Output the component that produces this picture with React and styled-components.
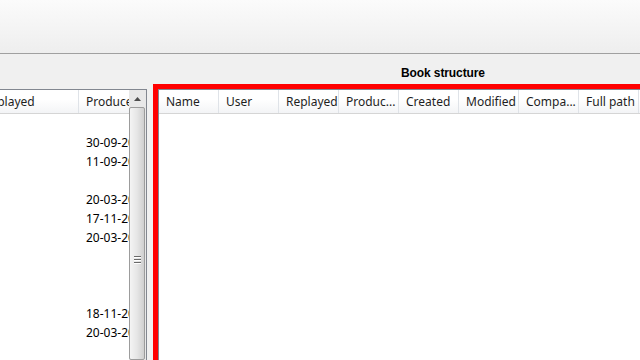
import React from "react";
import styled, { createGlobalStyle } from "styled-components";

const Global = createGlobalStyle`
  html, body { margin: 0; padding: 0; background: #f0f0f0; overflow: hidden; }
  body { font-family: "Noto Sans", "Open Sans", sans-serif; font-size: 12px; color: #1e1e1e; }
`;

const leftRows = ["", "30-09-2012", "11-09-2012", "", "20-03-2013", "17-11-2012", "20-03-2013", "", "", "", "18-11-2012", "20-03-2013", "", ""];
const rightCols = ["Name", "User", "Replayed", "Produc...", "Created", "Modified", "Compa...", "Full path"];

const App = () => {
  return (
    <Page>
      <Global />
      <Toolbar />
      <Body>
        <LeftSide>
          <ListFrame>
            <LeftList>
              <HeaderRow>
                <HeadCell $w={103}>Replayed</HeadCell>
                <HeadCell $w={60}>Produced</HeadCell>
              </HeaderRow>
              {leftRows.map((d, i) => (
                <Row key={i}>
                  <Cell $w={103} />
                  <Cell $w={60}>{d}</Cell>
                </Row>
              ))}
            </LeftList>
            <Scrollbar>
              <ArrowBtn>
                <svg width="7" height="4" viewBox="0 0 7 4">
                  <path d="M0 4 L3.5 0 L7 4 Z" fill="#4d4d4d" />
                </svg>
              </ArrowBtn>
              <Thumb>
                <Grip>
                  <span />
                  <span />
                  <span />
                </Grip>
              </Thumb>
            </Scrollbar>
          </ListFrame>
        </LeftSide>
        <RightSide>
          <Title>Book structure</Title>
          <Highlight>
            <RightList>
              <HeaderRow>
                {rightCols.map((c) => (
                  <HeadCell key={c} $w={60}>{c}</HeadCell>
                ))}
              </HeaderRow>
            </RightList>
          </Highlight>
        </RightSide>
      </Body>
    </Page>
  );
};

const Page = styled.div`
  width: 640px;
  height: 360px;
  overflow: hidden;
  display: flex;
  flex-direction: column;
`;

const Toolbar = styled.div`
  height: 53px;
  flex: none;
  background: linear-gradient(#fbfbfb, #eeeeee);
  border-bottom: 1px solid #a0a0a0;
`;

const Body = styled.div`
  flex: 1;
  display: flex;
  gap: 6px;
  min-height: 0;
`;

const LeftSide = styled.div`
  width: 147px;
  flex: none;
  padding-top: 35px;
  display: flex;
  flex-direction: column;
`;

const ListFrame = styled.div`
  flex: 1;
  display: flex;
  background: #fff;
  border-top: 1px solid #828790;
  border-right: 1px solid #828790;
  overflow: hidden;
`;

const LeftList = styled.div`
  flex: 1;
  overflow: hidden;
  & > div {
    margin-left: -24px;
  }
`;

const HeaderRow = styled.div`
  display: flex;
  height: 23px;
  background: linear-gradient(#ffffff 40%, #f3f4f6);
  border-bottom: 1px solid #d5d5d5;
`;

const HeadCell = styled.div`
  flex: none;
  width: ${(p) => p.$w}px;
  box-sizing: border-box;
  padding: 1px 0 0 7px;
  line-height: 22px;
  border-right: 1px solid #dfe3e8;
  white-space: nowrap;
  overflow: hidden;
  color: #1e1e1e;
`;

const Row = styled.div`
  display: flex;
  height: 19px;
`;

const Cell = styled.div`
  flex: none;
  width: ${(p) => p.$w}px;
  box-sizing: border-box;
  padding-left: 7px;
  line-height: 20px;
  white-space: nowrap;
  overflow: hidden;
  color: #000;
`;

const Scrollbar = styled.div`
  width: 17px;
  flex: none;
  display: flex;
  flex-direction: column;
  background: #e8e8e8;
`;

const ArrowBtn = styled.div`
  height: 17px;
  display: flex;
  align-items: center;
  justify-content: center;
`;

const Thumb = styled.div`
  flex: 1;
  margin: 0 1px 0 0;
  border: 1px solid #9c9c9c;
  border-radius: 2px;
  background: linear-gradient(90deg, #f4f4f4, #e6e6e6 50%, #cfcfcf);
  display: flex;
  justify-content: center;
  padding-top: 148px;
`;

const Grip = styled.div`
  display: flex;
  flex-direction: column;
  gap: 1px;
  span {
    display: block;
    width: 7px;
    height: 1px;
    background: #6a6a6a;
    border-bottom: 1px solid #fff;
  }
`;

const RightSide = styled.div`
  flex: 1;
  display: flex;
  flex-direction: column;
  min-width: 0;
`;

const Title = styled.div`
  height: 30px;
  flex: none;
  box-sizing: border-box;
  padding-left: 248px;
  padding-top: 12px;
  font-family: "Liberation Sans", Arial, sans-serif;
  font-weight: bold;
  font-size: 12px;
  color: #000;
  letter-spacing: -0.1px;
`;

const Highlight = styled.div`
  flex: 1;
  border-top: 5px solid #ff0000;
  border-left: 5px solid #ff0000;
  display: flex;
  flex-direction: column;
  margin-right: -10px;
`;

const RightList = styled.div`
  flex: 1;
  background: #fff;
  border-top: 1px solid #828790;
  border-left: 1px solid #828790;
  overflow: hidden;
`;

export default App;
